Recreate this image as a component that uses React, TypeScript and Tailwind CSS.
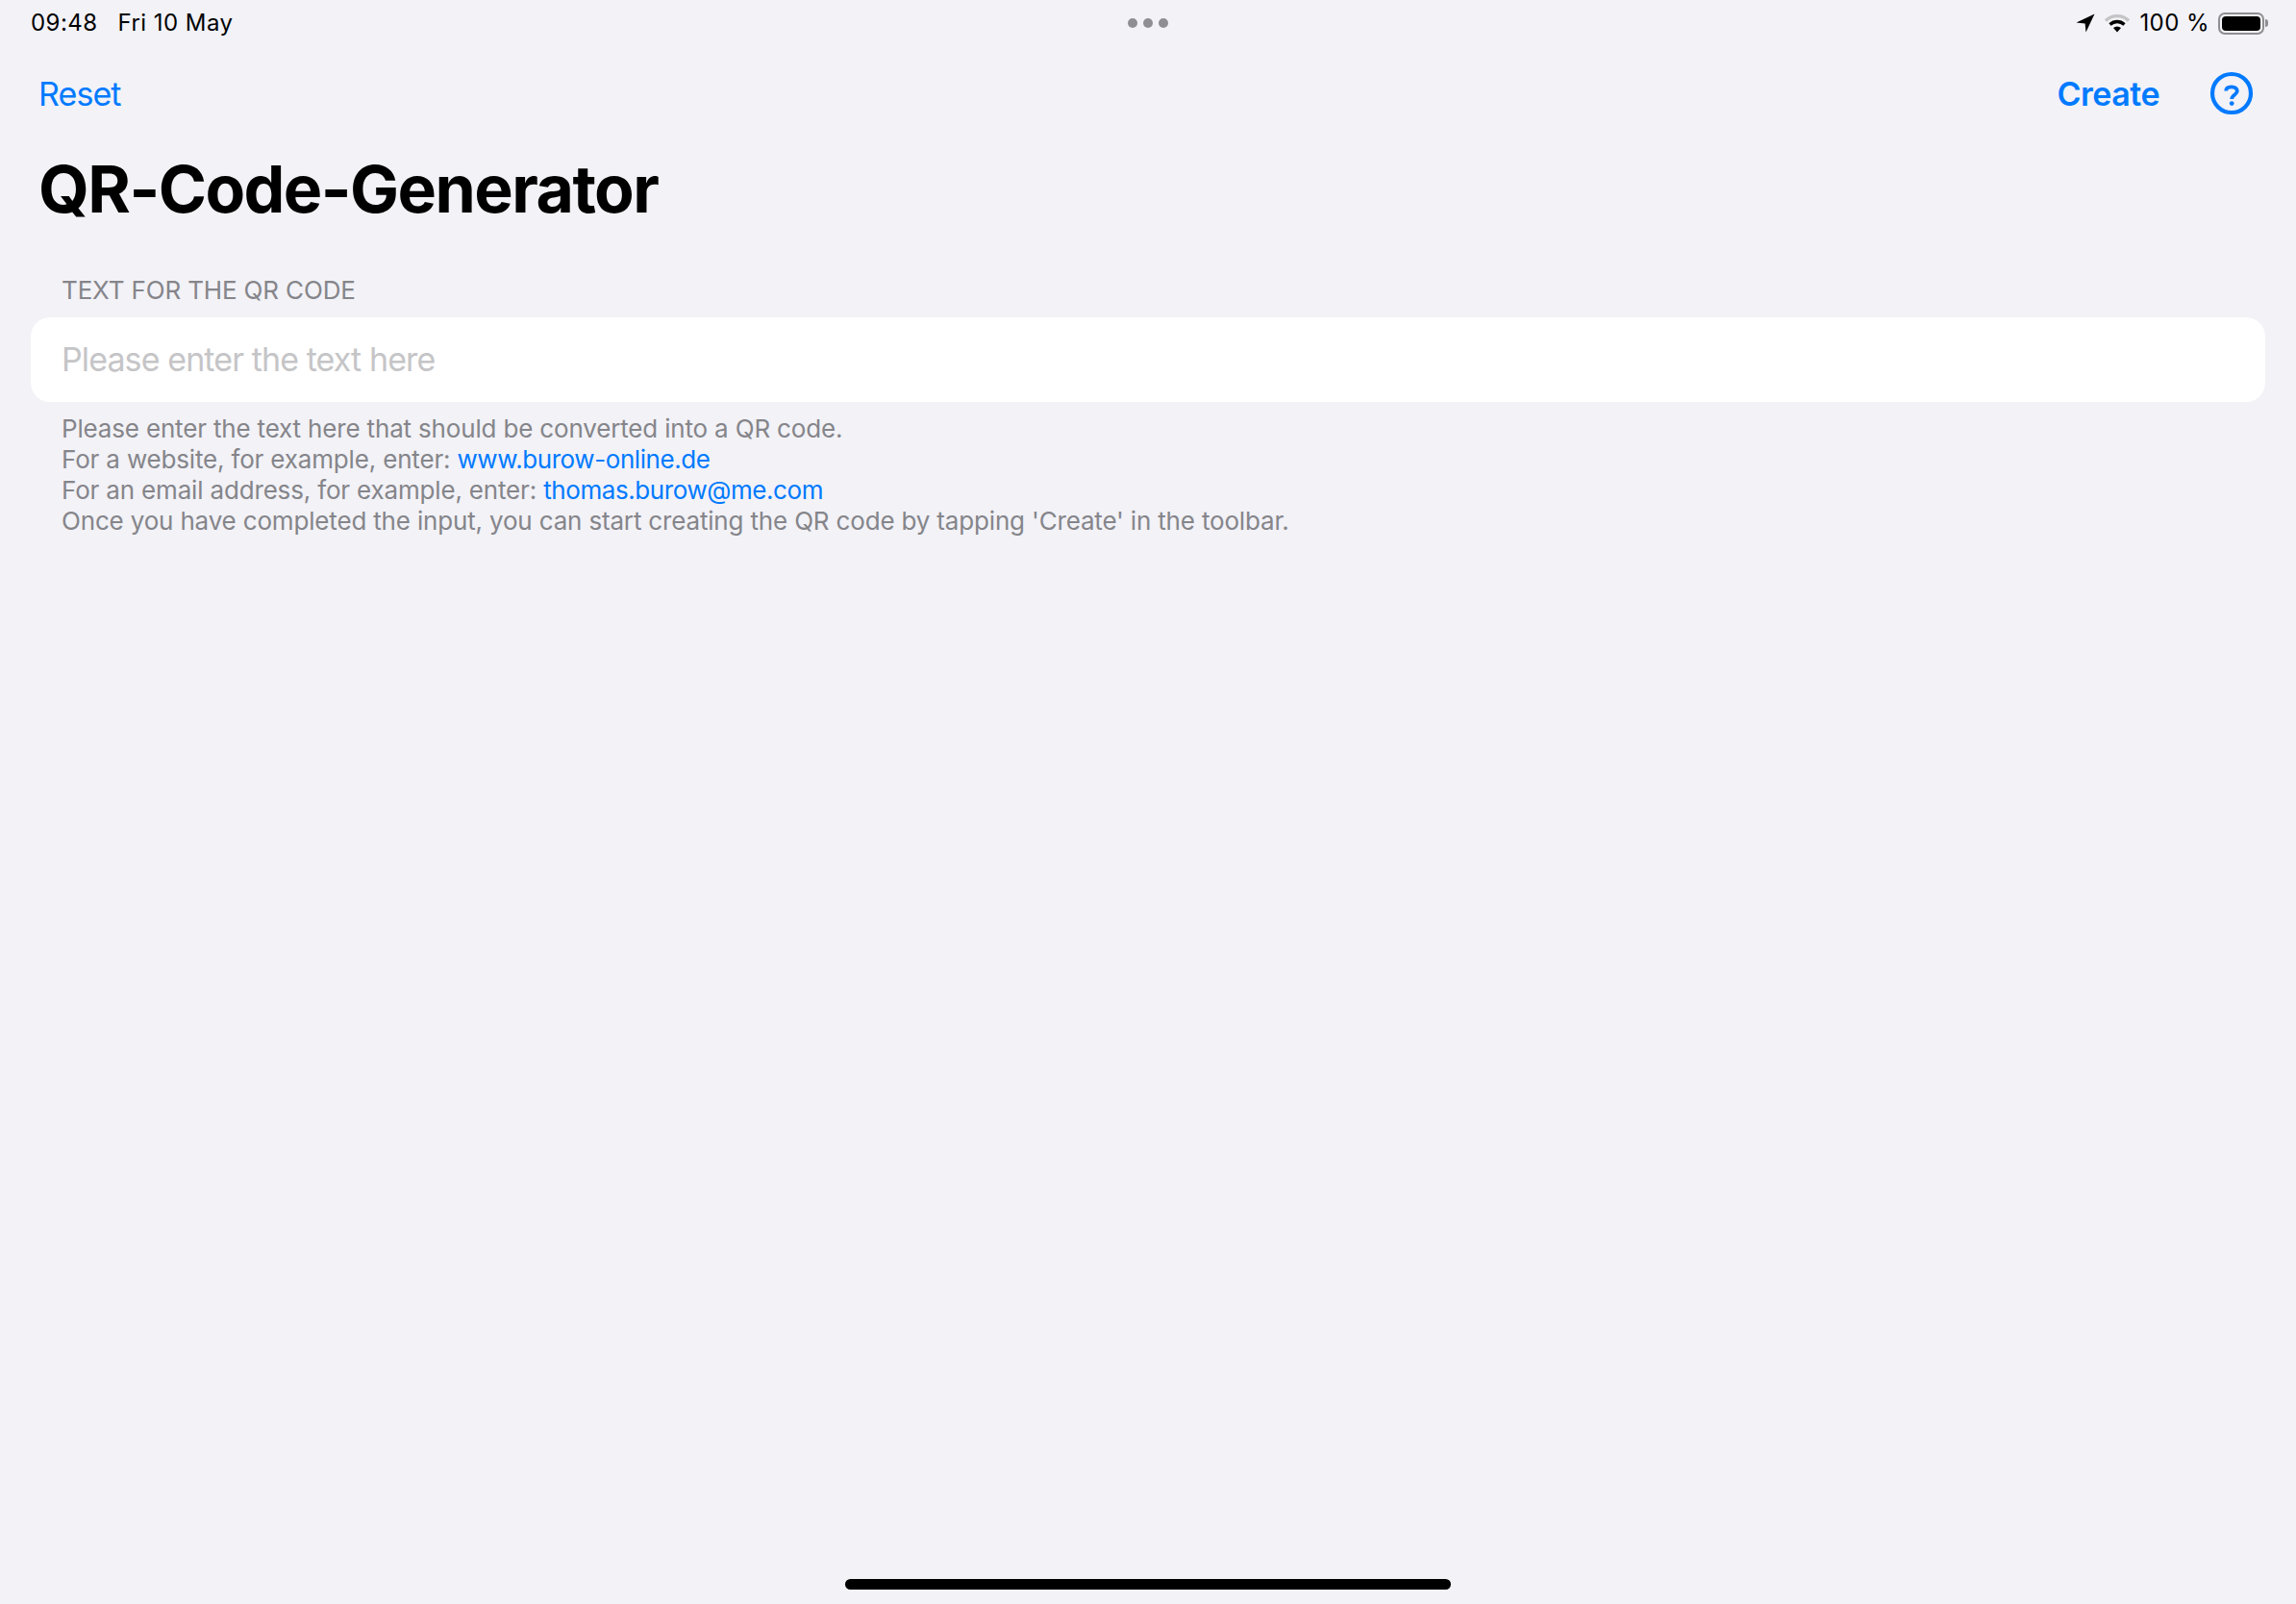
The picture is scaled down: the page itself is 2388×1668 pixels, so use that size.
import React from "react";

const StatusBar = () => (
  <div className="relative flex h-[48px] items-center justify-between pl-[32px] pr-[29px] text-[24px] tracking-[0.45px] text-black">
    <div className="flex gap-[21px]">
      <span>09:48</span>
      <span>Fri 10 May</span>
    </div>
    <div className="absolute left-[1173px] top-[19px] flex gap-[6px]">
      <span className="h-[10px] w-[10px] rounded-full bg-[#8e8e93]" />
      <span className="h-[10px] w-[10px] rounded-full bg-[#8e8e93]" />
      <span className="h-[10px] w-[10px] rounded-full bg-[#8e8e93]" />
    </div>
    <div className="flex items-center gap-[9px]">
      <svg width="20" height="20" viewBox="0 0 20 20">
        <path d="M19.5 0.5 L0.5 9.5 L9.6 10.4 L10.5 19.5 Z" fill="#000" />
      </svg>
      <svg width="28" height="20" viewBox="0 0 28 20" fill="none">
        <path d="M2 7.5 C9 1 19 1 26 7.5" stroke="#c4c4c6" strokeWidth="3.4" />
        <path d="M6.5 11.5 C11 7.5 17 7.5 21.5 11.5" stroke="#000" strokeWidth="3.4" />
        <path d="M10 15 L14 19.5 L18 15 C15.5 13 12.5 13 10 15 Z" fill="#000" />
      </svg>
      <span>100 %</span>
      <div className="flex items-center">
        <div className="flex h-[23px] w-[48px] items-center rounded-[7px] border-2 border-[#8e8e93] p-[2px]">
          <div className="h-full w-full rounded-[4px] bg-black" />
        </div>
        <div className="ml-[1px] h-[8px] w-[3px] rounded-r-full bg-[#8e8e93]" />
      </div>
    </div>
  </div>
);

const Toolbar = () => (
  <div className="flex h-[100px] items-center justify-between pb-[2px] pl-[40px] pr-[44px] text-[34px] tracking-[-0.9px] text-[#007aff]">
    <span>Reset</span>
    <div className="flex items-center gap-[52px]">
      <span className="font-semibold tracking-[-0.5px]">Create</span>
      <svg width="46" height="46" viewBox="0 0 46 46" fill="none">
        <circle cx="23" cy="23" r="20" stroke="#007aff" strokeWidth="4.2" />
        <path
          d="M17.2 20.5 C17.2 17.5 19.6 16.4 23 16.4 C26.4 16.4 28.8 18 28.8 20.8 C28.8 24.6 23.2 24.4 23.2 29"
          stroke="#007aff"
          strokeWidth="3.8"
        />
        <circle cx="23.2" cy="33.6" r="2.4" fill="#007aff" />
      </svg>
    </div>
  </div>
);

export default function App() {
  return (
    <div className="relative flex h-[1668px] w-[2388px] flex-col overflow-hidden bg-[#f2f2f7] font-['Inter',sans-serif]">
      <StatusBar />
      <Toolbar />
      <h1 className="ml-[40px] mt-[3px] h-[90px] text-[68px] leading-[90px] font-bold tracking-[-1.55px] text-black">
        QR-Code-Generator
      </h1>
      <div className="mt-[46px] px-[32px]">
        <div className="px-[32px] text-[26px] leading-[30px] tracking-[-0.15px] text-[#85858a]">
          TEXT FOR THE QR CODE
        </div>
        <div className="mt-[13px] flex h-[88px] items-center rounded-[20px] bg-white px-[32px] pb-[2px] text-[34px] tracking-[-0.9px] text-[#c5c5c7]">
          Please enter the text here
        </div>
        <div className="mt-[12px] px-[32px] text-[26px] leading-[32px] tracking-[-0.17px] text-[#85858a]">
          <p>Please enter the text here that should be converted into a QR code.</p>
          <p>
            For a website, for example, enter:{" "}
            <span className="tracking-[-0.42px] text-[#007aff]">www.burow-online.de</span>
          </p>
          <p>
            For an email address, for example, enter:{" "}
            <span className="tracking-[-0.42px] text-[#007aff]">thomas.burow@me.com</span>
          </p>
          <p>
            Once you have completed the input, you can start creating the QR code by tapping
            'Create' in the toolbar.
          </p>
        </div>
      </div>
      <div className="absolute bottom-[15px] left-[879px] h-[11px] w-[630px] rounded-full bg-black" />
    </div>
  );
}
